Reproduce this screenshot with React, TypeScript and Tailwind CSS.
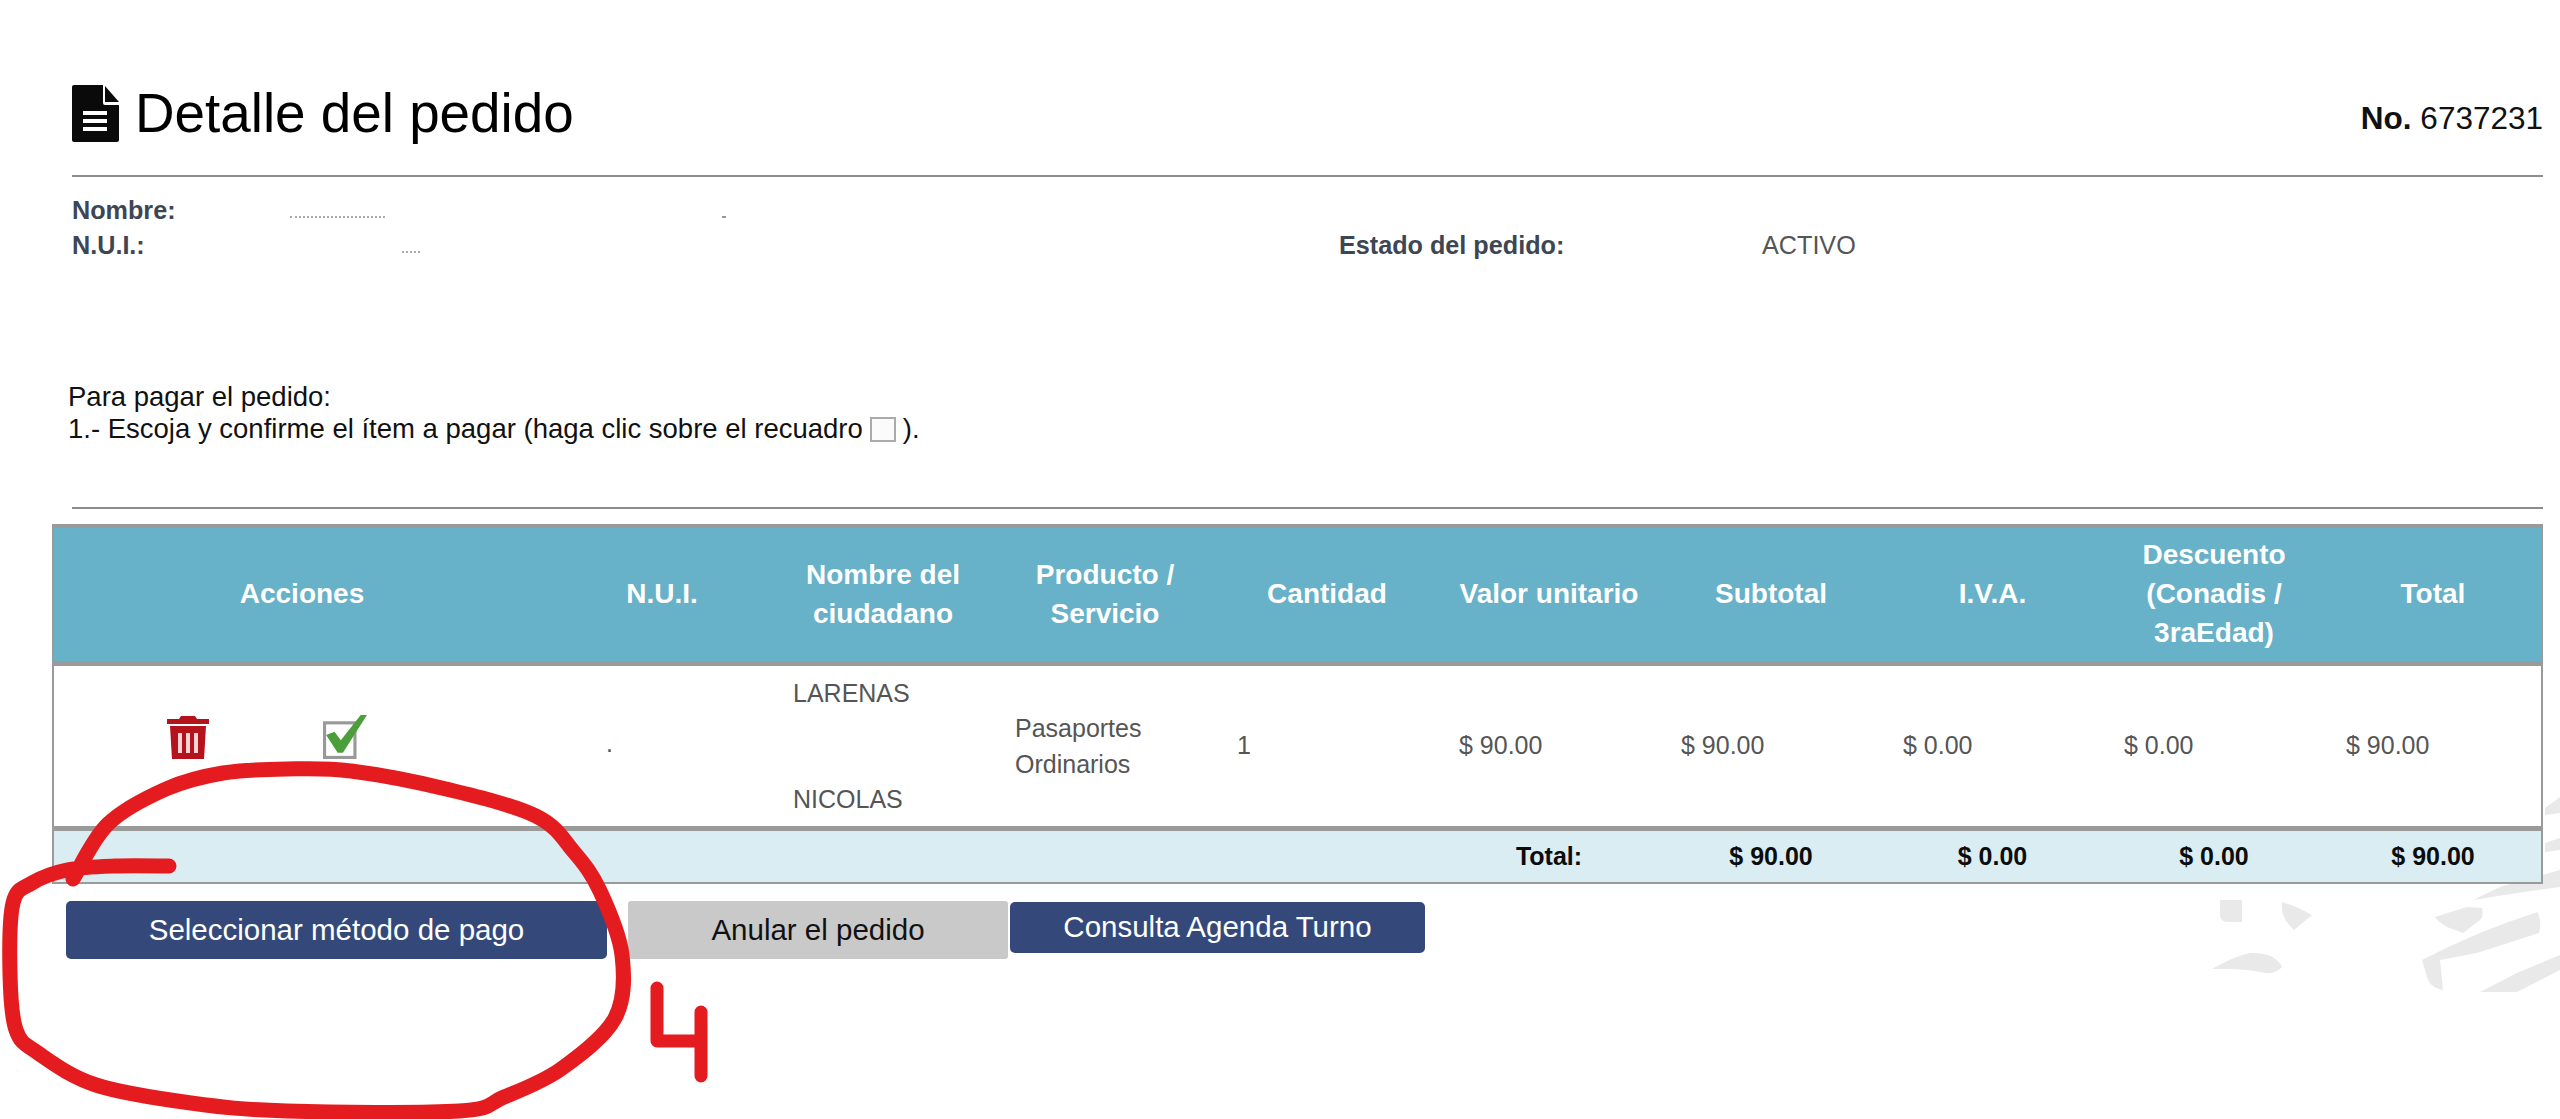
const sans = "font-['Liberation_Sans',Arial,sans-serif]"

function FileIcon() {
  return (
    <svg viewBox="0 0 47 57" className="w-[47px] h-[57px] shrink-0" fill="#0a0a0a">
      <path d="M2 0h29v18a2 2 0 0 0 2 2h14v35a2 2 0 0 1-2 2H2a2 2 0 0 1-2-2V2a2 2 0 0 1 2-2z" />
      <path d="M33 1l14 16H33z" />
      <rect x="11" y="26" width="24" height="4" fill="#fff" />
      <rect x="11" y="34" width="24" height="4" fill="#fff" />
      <rect x="11" y="42" width="24" height="4" fill="#fff" />
    </svg>
  )
}

function TrashIcon() {
  return (
    <svg viewBox="0 0 42 43" className="w-[42px] h-[43px]" fill="#b5121b">
      <path d="M14 0h14l2 3h12v5H0V3h12z" />
      <path d="M3 10h36l-2 33H5z" />
      <rect x="11" y="17" width="4" height="20" fill="#f6d5d6" />
      <rect x="19" y="17" width="4" height="20" fill="#f6d5d6" />
      <rect x="27" y="17" width="4" height="20" fill="#f6d5d6" />
    </svg>
  )
}

function CheckIcon() {
  return (
    <svg viewBox="0 0 42 42" className="w-[44px] h-[44px]">
      <rect x="1.5" y="7.5" width="29" height="33" fill="#fff" stroke="#999" strokeWidth="3" />
      <path d="M3 19l8-3 6 8L36 0h6L19 36h-5z" fill="#4b9e3a" />
    </svg>
  )
}

function Watermark() {
  return (
    <svg className="absolute inset-0 w-full h-full" viewBox="0 0 2560 1119" fill="#e9e9e9">
      <path d="M2220 900h22v22h-14q-8 0-8-8z" />
      <path d="M2282 902q14 4 30 13l-18 15q-14-12-12-28z" />
      <path d="M2212 969Q2235 956 2250 953Q2275 952 2282 967Q2276 974 2265 973Q2240 968 2212 969z" />
      <path d="M2435 917Q2450 912 2467 907L2482 908Q2484 916 2480 920L2463 933L2447 927Q2438 922 2435 917z" />
      <path d="M2422 960Q2480 930 2538 912Q2542 925 2539 933L2477 953L2440 960L2443 990Q2432 988 2428 980z" />
      <path d="M2480 992L2517 973L2560 955V970L2517 992z" />
      <path d="M2473 900L2500 887L2560 870V887L2517 893z" />
      <path d="M2545 808L2560 797V813L2545 815zM2545 843L2560 838V850L2545 852z" />
    </svg>
  )
}

// Smooth hand-drawn stroke through the sampled points
function smooth(pts: number[][]) {
  let d = `M${pts[0][0]} ${pts[0][1]}`
  for (let i = 0; i < pts.length - 1; i++) {
    const p0 = pts[i - 1] || pts[i]
    const p1 = pts[i]
    const p2 = pts[i + 1]
    const p3 = pts[i + 2] || p2
    const c1 = [p1[0] + (p2[0] - p0[0]) / 6, p1[1] + (p2[1] - p0[1]) / 6]
    const c2 = [p2[0] - (p3[0] - p1[0]) / 6, p2[1] - (p3[1] - p1[1]) / 6]
    d += `C${c1[0]} ${c1[1]} ${c2[0]} ${c2[1]} ${p2[0]} ${p2[1]}`
  }
  return d
}

const circle = [
  [169, 866], [115, 866], [67, 870], [32, 883], [13, 903], [10, 974], [16, 1030], [38, 1053], [96, 1085],
  [191, 1103], [287, 1111], [459, 1111], [504, 1097], [561, 1069], [615, 1018], [622, 955], [600, 891],
  [574, 852], [536, 816], [446, 789], [351, 771], [287, 769], [223, 773], [166, 789], [108, 824], [73, 879],
]

function Doodle() {
  return (
    <svg className="absolute inset-0 w-full h-full pointer-events-none" viewBox="0 0 2560 1119" fill="none" stroke="#e51c1f" strokeLinecap="round" strokeLinejoin="round">
      <path strokeWidth="15" d={smooth(circle)} />
      <path strokeWidth="13" d="M657 988V1041H701M701 1012V1076" />
    </svg>
  )
}

const headers = ["N.U.I.", "Nombre del ciudadano", "Producto / Servicio", "Cantidad", "Valor unitario", "Subtotal", "I.V.A.", "Descuento (Conadis / 3raEdad)", "Total"]
const amounts = ["$ 90.00", "$ 90.00", "$ 0.00", "$ 0.00", "$ 90.00"]
const totals = ["$ 90.00", "$ 0.00", "$ 0.00", "$ 90.00"]

const thBorder = "border-t-4 border-b-[5px] border-[#9a9a9a] font-bold pb-[2px]"
const tfBorder = "border-t-[5px] border-b-2 border-[#9a9a9a] text-center"

export default function App() {
  return (
    <main className={`relative h-[1119px] overflow-hidden bg-white text-black ${sans}`}>
      <Watermark />

      <div className="relative">
        {/* Header */}
        <div className="pt-[85px] pl-[72px] pr-[17px]">
          <div className="flex items-center justify-between h-[57px]">
            <div className="flex items-center gap-[16px]">
              <FileIcon />
              <h1 className="text-[54.8px] leading-none">Detalle del pedido</h1>
            </div>
            <p className="text-[31.5px] pt-[10px] text-[#111]">
              <b>No.</b> 6737231
            </p>
          </div>
          <div className="mt-[33px] h-[2px] bg-[#8c8c8c]" />

          <div className="mt-[16px] text-[25.2px] leading-[34px] text-[#3d4653]">
            <div className="flex items-center h-[34px]">
              <b className="w-[218px]">Nombre:</b>
              <span className="mt-[14px] w-[95px] border-t-2 border-dotted border-[#aaa]" />
              <span className="mt-[14px] ml-[337px] w-[4px] h-[2px] bg-[#999]" />
            </div>
            <div className="flex items-center h-[34px] mt-[1px]">
              <b className="w-[330px]">N.U.I.:</b>
              <span className="mt-[14px] w-[18px] border-t-2 border-dotted border-[#aaa]" />
              <b className="ml-[919px] w-[423px]">Estado del pedido:</b>
              <span className="font-normal text-[#555]">ACTIVO</span>
            </div>
          </div>
        </div>

        {/* Instrucciones */}
        <div className="mt-[119px] pl-[68px] text-[27.5px] leading-[32px] text-[#111]">
          <p>Para pagar el pedido:</p>
          <p className="flex items-center">
            1.- Escoja y confirme el ítem a pagar (haga clic sobre el recuadro
            <span className="inline-block w-[26px] h-[25px] mx-[7px] border-2 border-[#aaa] bg-[#fbfbfb]" />
            ).
          </p>
        </div>
        <div className="mt-[62px] ml-[72px] mr-[17px] h-[2px] bg-[#8c8c8c]" />

        {/* Tabla */}
        <div className="mt-[15px] ml-[52px] mr-[17px]">
          <table className="w-full table-fixed border-x-2 border-[#9a9a9a] bg-white border-separate border-spacing-0">
            <colgroup>
              <col className="w-[498px]" />
              <col className="w-[220px]" />
              <col className="w-[222px]" />
              <col className="w-[222px]" />
              <col className="w-[222px]" />
              <col className="w-[222px]" />
              <col className="w-[222px]" />
              <col className="w-[221px]" />
              <col className="w-[222px]" />
              <col />
            </colgroup>
            <thead>
              <tr className="h-[142px] bg-[#67b1c9] text-white text-[28px] leading-[39px]">
                <th className={`${thBorder} pr-[2px]`}>Acciones</th>
                {headers.map((h) => (
                  <th key={h} className={`${thBorder} px-[16px]`}>
                    {h === "Producto / Servicio" || h === "Nombre del ciudadano" || h.startsWith("Descuento") ? <span className="block px-[6px]">{h}</span> : h}
                  </th>
                ))}
              </tr>
            </thead>
            <tbody className="text-[25px] text-[#555]">
              <tr className="h-[160px]">
                <td>
                  <div className="flex items-center pl-[113px] pb-[18px] gap-[114px]">
                    <TrashIcon />
                    <CheckIcon />
                  </div>
                </td>
                <td className="pl-[54px] pb-[4px]">.</td>
                <td className="pl-[21px] leading-[36px]">
                  <p>LARENAS</p>
                  <p className="mt-[70px]">NICOLAS</p>
                </td>
                <td className="pl-[21px] leading-[36px]">Pasaportes Ordinarios</td>
                <td className="pl-[21px]">1</td>
                {amounts.map((a, i) => (
                  <td key={i} className="pl-[21px]">
                    {a}
                  </td>
                ))}
              </tr>
            </tbody>
            <tfoot>
              <tr className="h-[58px] bg-[#d9edf3] text-[25px] font-bold text-[#0c0c0c]">
                <td colSpan={5} className={tfBorder} />
                <td className={tfBorder}>Total:</td>
                {totals.map((t, i) => (
                  <td key={i} className={tfBorder}>
                    {t}
                  </td>
                ))}
              </tr>
            </tfoot>
          </table>
        </div>

        {/* Botones */}
        <div className="mt-[17px] ml-[66px] flex items-start text-[29.5px]">
          <button className="w-[541px] h-[58px] rounded-[5px] bg-[#34497a] text-white">Seleccionar método de pago</button>
          <button className="ml-[21px] w-[380px] h-[58px] rounded-[3px] bg-[#c9c9c9] text-[#111]">Anular el pedido</button>
          <button className="ml-[2px] mt-[1px] w-[415px] h-[51px] rounded-[5px] bg-[#34497a] text-white">Consulta Agenda Turno</button>
        </div>
      </div>

      <Doodle />
    </main>
  )
}
